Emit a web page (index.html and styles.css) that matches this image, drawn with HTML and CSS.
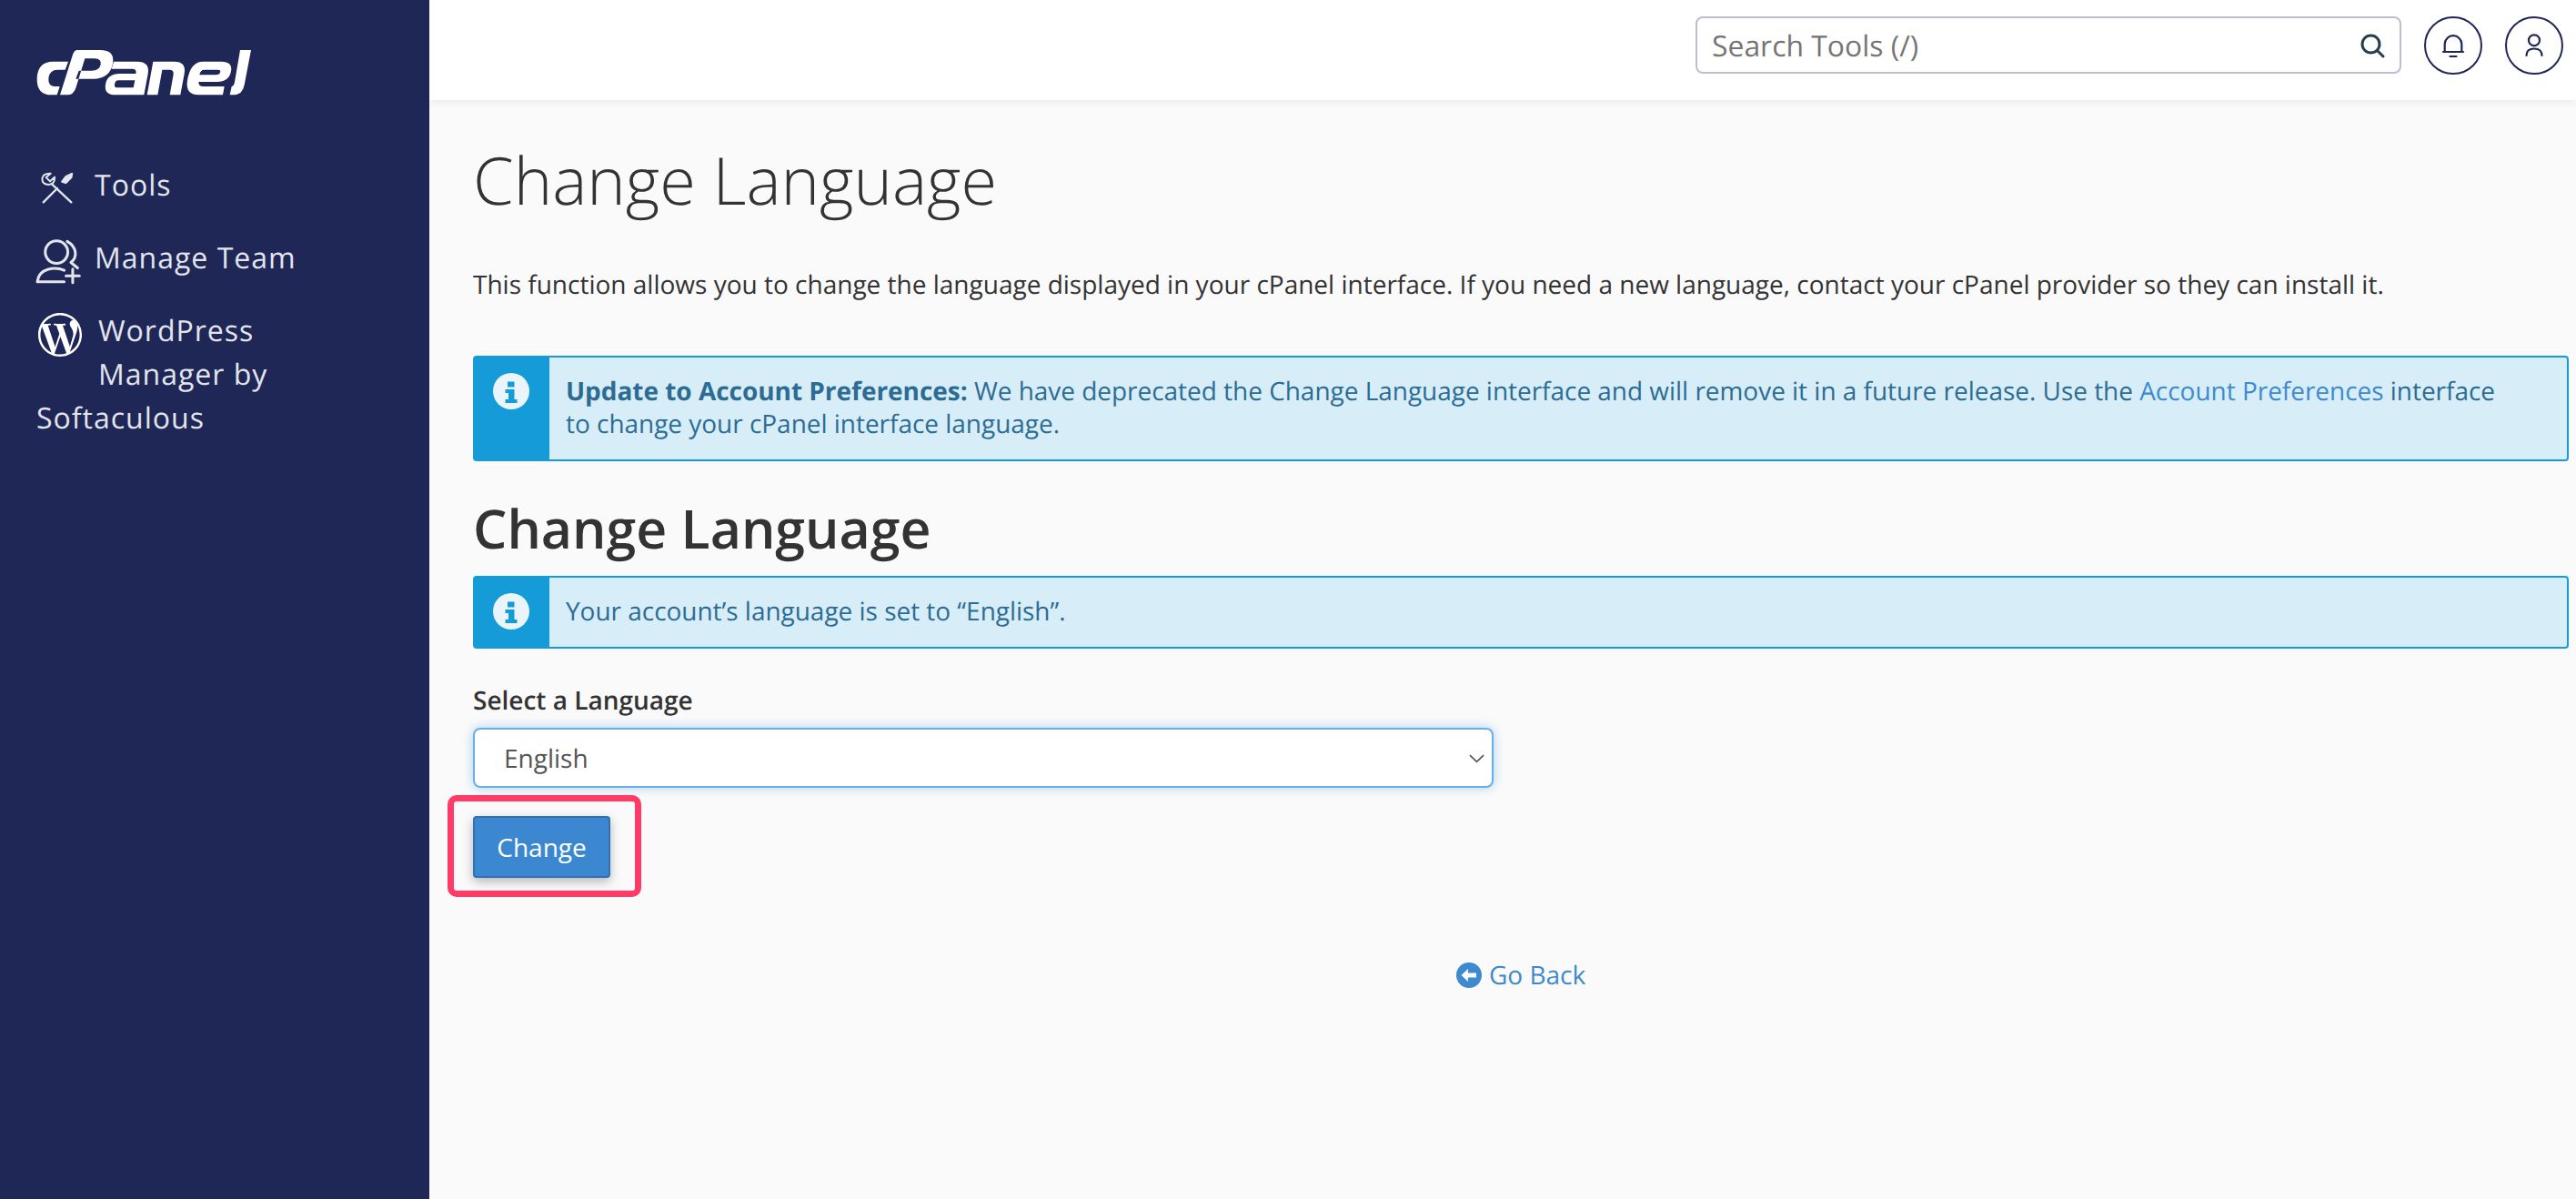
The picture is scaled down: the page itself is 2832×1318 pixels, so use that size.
FILE: index.html
```html
<!DOCTYPE html>
<html lang="en">
<head>
<meta charset="utf-8">
<title>Change Language - cPanel</title>
<link rel="stylesheet" href="styles.css">
</head>
<body>
<div class="app">
  <aside class="sidebar">
    <a class="logo" href="#" aria-label="cPanel">
      <svg class="logo-svg" viewBox="0 0 780 210" fill="#fff" fill-rule="evenodd">
        <path d="M135 68H85Q35 68 32 122Q30 178 80 178H98L107 150H92Q68 150 70 122Q74 95 100 95H125Z"/>
        <path d="M165 30H240Q290 30 282 75Q272 125 218 125H160L170 98H212Q238 98 242 78Q245 58 222 58H190L160 155Q152 178 132 178H108L150 45Q155 30 165 30Z"/>
        <path d="M285 68H362Q405 68 398 108L385 178H292Q252 178 258 143Q264 108 305 108H358Q362 92 345 92H278ZM300 130Q290 130 288 143Q286 154 298 154H350L355 130Z"/>
        <path d="M415 68H485Q525 68 518 108L505 178H470L482 110Q484 95 468 95H445L430 178H395Z"/>
        <path d="M580 68H640Q678 68 672 100Q666 135 625 135H565Q564 150 580 150H650L645 178H565Q520 178 528 130Q538 68 580 68ZM585 95Q570 95 568 112H622Q636 112 637 100Q637 95 628 95Z"/>
        <path d="M702 30H738L716 145Q710 178 680 178H668L674 150Q682 148 684 135Z"/>
      </svg>
    </a>
    <nav class="nav">
      <a class="nav-item" href="#">
        <svg class="nav-icon tools" viewBox="40 20 120 120" fill="none" stroke="#e3e5ec" stroke-width="7" stroke-linecap="round" stroke-linejoin="round">
          <path d="M78 31 63 44 76 57 91 43Q93 66 72 68 50 68 50 48 52 30 78 31Z" stroke-width="6"/>
          <path d="M82 66 146 126"/>
          <path d="M148 32 146 44 128 62 116 58 128 42Z" fill="#e3e5ec"/>
          <path d="M100 80 54 126"/>
        </svg>
        <span>Tools</span>
      </a>
      <a class="nav-item" href="#">
        <svg class="nav-icon team" viewBox="115 785 155 155" fill="none" stroke="#e3e5ec" stroke-width="9" stroke-linecap="round" stroke-linejoin="round">
          <circle cx="187" cy="830" r="37"/>
          <path d="M222 795C252 812 258 845 234 864L256 882"/>
          <path d="M212 890C185 878 130 880 124 927H212"/>
          <path d="M240 886V930M218 908H262"/>
        </svg>
        <span>Manage Team</span>
      </a>
      <a class="nav-item wrap" href="#">
        <svg class="nav-icon wp" viewBox="0 0 24 24" fill="#fff"><path d="M21.469 6.825c.84 1.537 1.318 3.3 1.318 5.175 0 3.979-2.156 7.456-5.363 9.325l3.295-9.527c.615-1.54.82-2.771.82-3.864 0-.405-.026-.78-.07-1.11m-7.981.105c.647-.03 1.232-.105 1.232-.105.582-.075.514-.93-.067-.899 0 0-1.755.135-2.88.135-1.064 0-2.85-.15-2.85-.15-.585-.03-.661.855-.075.885 0 0 .54.061 1.125.09l1.68 4.605-2.37 7.08L5.354 6.9c.649-.03 1.234-.1 1.234-.1.585-.075.516-.93-.065-.896 0 0-1.746.138-2.874.138-.2 0-.438-.008-.69-.015C4.911 3.15 8.235 1.215 12 1.215c2.809 0 5.365 1.072 7.286 2.833-.046-.003-.091-.009-.141-.009-1.06 0-1.812.923-1.812 1.914 0 .89.513 1.643 1.06 2.531.411.72.89 1.643.89 2.977 0 .915-.354 1.994-.821 3.479l-1.075 3.585-3.9-11.61.001.014zM12 22.784c-1.059 0-2.081-.153-3.048-.437l3.237-9.406 3.315 9.087c.024.053.05.101.078.149-1.12.393-2.325.609-3.582.609M1.211 12c0-1.564.336-3.05.935-4.39L7.29 21.709C3.694 19.96 1.212 16.271 1.211 12M12 0C5.385 0 0 5.385 0 12s5.385 12 12 12 12-5.385 12-12S18.615 0 12 0"/></svg>
        WordPress Manager by Softaculous
      </a>
    </nav>
  </aside>
  <div class="main">
    <header class="topbar">
      <label class="search">
        <span class="search-text">Search Tools (/)</span>
        <svg class="search-icon" viewBox="0 0 28 28" fill="none" stroke="#24404f" stroke-width="3" stroke-linecap="round"><circle cx="12.500" cy="12.500" r="9.500"/><path d="m20 20 6 6"/></svg>
      </label>
      <button class="round" aria-label="Notifications">
        <svg class="round-icon" viewBox="0 0 28 28" fill="none" stroke="#1f2757" stroke-width="2.200" stroke-linecap="round"><path d="M4.700 21V12.500a9.300 9.300 0 0 1 18.600 0V21"/><path d="M3 21h22"/><path d="M10.500 26h7"/></svg>
      </button>
      <button class="round" aria-label="Account">
        <svg class="round-icon" viewBox="0 0 28 28" fill="none" stroke="#1f2757" stroke-width="2.200" stroke-linecap="round"><circle cx="14" cy="8.300" r="6"/><path d="M5.500 25c0-5 3-7.500 8.500-7.500s8.500 2.500 8.500 7.500"/></svg>
      </button>
    </header>
    <main class="content">
      <h1 class="title">Change Language</h1>
      <p class="intro">This function allows you to change the language displayed in your cPanel interface. If you need a new language, contact your cPanel provider so they can install it.</p>
      <div class="alert alert-tall">
        <div class="alert-side">
          <svg class="info" viewBox="0 0 40 40"><circle cx="20" cy="20" r="20" fill="#e9f5fb"/><path d="M16 9.500h7.500v6H16ZM13.500 18h10v11h3v4H13.500v-4h3.500v-7h-3.500Z" fill="#169bd9"/></svg>
        </div>
        <div class="alert-body"><strong>Update to Account Preferences:</strong> We have deprecated the Change Language interface and will remove it in a future release. Use the <a href="#">Account Preferences</a> interface to change your cPanel interface language.</div>
      </div>
      <h2 class="heading">Change Language</h2>
      <div class="alert">
        <div class="alert-side">
          <svg class="info" viewBox="0 0 40 40"><circle cx="20" cy="20" r="20" fill="#e9f5fb"/><path d="M16 9.500h7.500v6H16ZM13.500 18h10v11h3v4H13.500v-4h3.500v-7h-3.500Z" fill="#169bd9"/></svg>
        </div>
        <div class="alert-body">Your account’s language is set to “English”.</div>
      </div>
      <label class="field-label">Select a Language</label>
      <div class="select">
        <span>English</span>
        <svg class="chevron" viewBox="0 0 18 10" fill="none" stroke="#555" stroke-width="1.800"><path d="m1 1 8 7.500L17 1"/></svg>
      </div>
      <div class="action">
        <button class="btn">Change</button>
        <span class="highlight"></span>
      </div>
      <div class="back-row">
        <a class="back" href="#">
          <svg class="back-icon" viewBox="0 0 28 28"><circle cx="14" cy="14" r="14" fill="#3d8ace"/><path d="M5.500 14 13 7v4.500h9v5h-9V21Z" fill="#fafafa"/></svg>
          Go Back
        </a>
      </div>
    </main>
  </div>
</div>
</body>
</html>
```
FILE: styles.css
```css
* { box-sizing: border-box; }
html, body { margin: 0; height: 100%; }
body { font-family: "Open Sans", sans-serif; background: #fafafa; color: #333; font-size: 28px; text-rendering: geometricPrecision; }
a { text-decoration: none; }
.app { display: flex; height: 1318px; overflow: hidden; }
.sidebar { width: 472px; flex: none; background: #1f2757; padding: 54px 60px 0 40px; color: #e3e5ec; }
.logo { display: block; height: 50px; margin-left: -10px; margin-top: -9px; }
.logo-svg { display: block; width: 260px; height: 70px; }
.nav { margin-top: 85px; display: flex; flex-direction: column; }
.nav-item { display: flex; align-items: center; height: 48px; color: #e3e5ec; font-size: 32px; letter-spacing: 1px; line-height: 48px; }
.nav-item.wrap { display: block; height: auto; }
.nav-item + .nav-item { margin-top: 32px; }
.nav-icon { flex: none; }
.tools { width: 40px; height: 40px; margin: 5px 21px 0 3px; }
.team { width: 52px; height: 52px; margin: 8px 14px 0 -2px; }
.wp { float: left; width: 48px; height: 48px; margin: 4px 18px 10px 2px; }
.main { flex: 1; min-width: 0; display: flex; flex-direction: column; }
.topbar { height: 110px; flex: none; background: #fff; box-shadow: 0 2px 10px rgba(0,0,0,.07); display: flex; align-items: flex-start; justify-content: flex-end; padding: 18px 14px 0 0; gap: 25px; }
.search { width: 776px; height: 63px; border: 2px solid #bdbfd0; border-radius: 8px; display: flex; align-items: center; justify-content: space-between; padding: 2px 16px 0; background: #fff; }
.search-text { font-size: 31.9px; color: #757575; }
.search-icon { width: 28px; height: 28px; margin-top: -2px; }
.round { width: 64px; height: 64px; padding: 0; border: 2px solid #1f2757; border-radius: 50%; background: #fff; display: flex; align-items: center; justify-content: center; }
.round-icon { width: 28px; height: 28px; }
.content { padding: 44px 8px 0 48px; }
.title { font-size: 72px; font-weight: 300; line-height: 88px; margin: 0; color: #333; }
.intro { margin: 51px 0 0; font-size: 28px; line-height: 40px; color: #333; }
.alert { display: flex; height: 80px; border: 2px solid #169bd9; border-radius: 4px; background: #d7edf8; }
.alert-tall { height: 116px; margin-top: 58px; }
.alert-side { width: 83px; flex: none; background: #169bd9; padding: 18px 0 0 21px; margin: -1px 0 -1px -1px; }
.info { display: block; width: 40px; height: 40px; }
.alert-body { padding: 19px 60px 0 18px; font-size: 27.95px; line-height: 36px; color: #2c6c94; }
.alert-body a { color: #3d8ace; }
.heading { font-size: 59px; font-weight: 600; line-height: 82px; margin: 33px 0 0; color: #333; }
.heading + .alert { margin-top: 11px; }
.field-label { display: block; margin-top: 37px; font-weight: 600; font-size: 28px; line-height: 40px; }
.select { width: 1122px; height: 66px; margin-top: 10px; background: #fff; border: 2px solid #66afe9; border-radius: 8px; box-shadow: 0 0 12px rgba(102,175,233,.55); display: flex; align-items: center; justify-content: space-between; padding: 2px 8px 0 32px; color: #555; }
.chevron { width: 17px; height: 10px; }
.action { position: relative; margin-top: 31px; }
.btn { display: block; width: 151px; height: 68px; padding: 0; background: #3b88d0; border: 2px solid #2c72b4; border-radius: 4px; color: #fff; font: 28px "Open Sans", sans-serif; box-shadow: 0 4px 12px rgba(0,0,0,.28); }
.highlight { position: absolute; left: -28px; top: -23px; width: 213px; height: 112px; border: 7px solid #ff3b66; border-radius: 10px; }
.back-row { margin-top: 87px; padding-left: 1081px; }
.back { display: inline-flex; align-items: center; gap: 8px; color: #3d8ace; line-height: 40px; }
.back-icon { width: 28px; height: 28px; }
```
